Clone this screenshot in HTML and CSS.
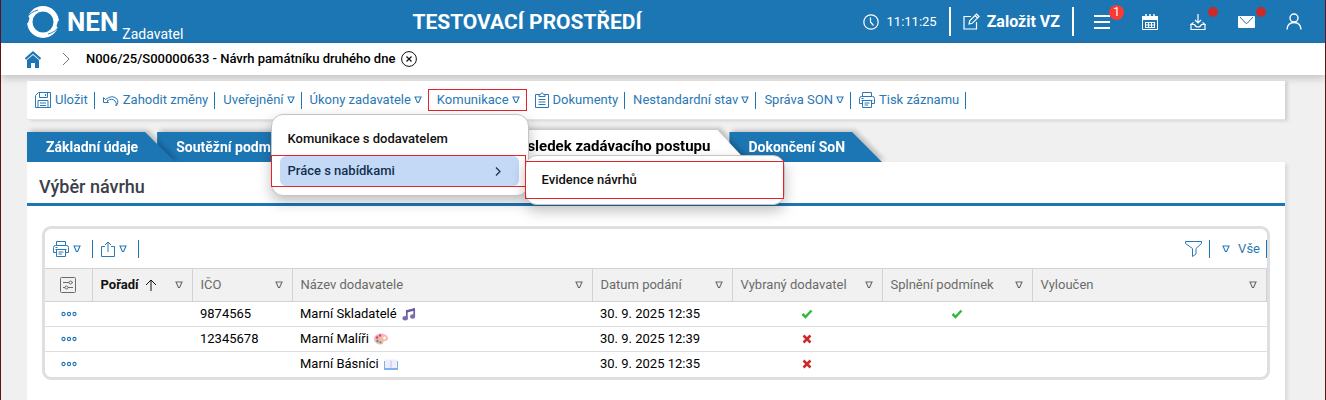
FILE: index.html
```html
<!DOCTYPE html>
<html lang="cs">
<head>
    <meta charset="UTF-8">
    <meta name="viewport" content="width=device-width, initial-scale=1.0">
    <title>NEN - Zadavatel</title>
    <link rel="stylesheet" href="styles.css">
</head>
<body>
    <!-- shared icons -->
    <svg class="sprite" aria-hidden="true">
        <symbol id="arrow" viewBox="0 0 8 8"><path d="M1 1h6L4.6 6.5H3.4z" fill="none" stroke="currentColor" stroke-width="1.1"/></symbol>
        <symbol id="printer" viewBox="0 0 16 16"><path d="M3.5 4.5v-4h9v4M3.5 11.500h-3v-5q0-2 2-2h11q2 0 2 2v5h-3M2.500 6.500h2M2.500 8.500h11M3.500 8.500v7h9v-7M5.500 11h5M5.500 13h3.500" fill="none" stroke="currentColor"/></symbol>
        <symbol id="dots" viewBox="0 0 16 6"><g fill="none" stroke="currentColor" stroke-width="1.100"><circle cx="2.500" cy="3" r="1.600"/><circle cx="8" cy="3" r="1.600"/><circle cx="13.500" cy="3" r="1.600"/></g></symbol>
        <symbol id="yes" viewBox="0 0 12 10"><path d="M1.500 5l3 3 6-6.500" fill="none" stroke="#38b838" stroke-width="2.500"/></symbol>
        <symbol id="no" viewBox="0 0 10 10"><path d="M1.500 1.500l7 7M8.500 1.500l-7 7" fill="none" stroke="#cc2a2a" stroke-width="2.500"/></symbol>
    </svg>

    <header class="header">
        <a class="brand" href="#">
            <svg width="32" height="32" viewBox="0 0 32 32">
                <circle cx="16" cy="16" r="13.200" fill="none" stroke="#fff" stroke-width="5.400"/>
                <path d="M0 12Q3 6 11 4M32 20q-3 6-11 8" fill="none" stroke="#1d76b4" stroke-width=".9"/>
                <path d="M0 9l2.500 3L1 17H0zM32 23l-2.500-3L31 15h1z" fill="#1d76b4"/>
            </svg>
            <span class="brand-name">NEN</span>
            <span class="brand-role">Zadavatel</span>
        </a>
        <div class="env">TESTOVACÍ PROSTŘEDÍ</div>
        <div class="header-right">
            <div class="clock">
                <svg width="16" height="16" viewBox="0 0 16 16" fill="none" stroke="currentColor" stroke-width="1.200"><circle cx="8" cy="8" r="7.200"/><path d="M7.500 3.500V8l3 3.500"/></svg>
                <span>11:11:25</span>
            </div>
            <button class="new-vz">
                <svg width="17" height="17" viewBox="0 0 17 17" fill="none" stroke="currentColor" stroke-width="1.200"><path d="M8 3.500H1v12.500h12.500V9M6 11l.7-3.200L13.500 1l2.500 2.500-6.800 6.800zM12 2.500L14.500 5"/></svg>
                Založit VZ
            </button>
            <button class="icon-btn" aria-label="Menu">
                <svg width="16" height="16" viewBox="0 0 16 16" stroke="currentColor" stroke-width="2"><path d="M0 2h16M0 8h16M0 14h16"/></svg>
                <span class="badge">1</span>
            </button>
            <button class="icon-btn" aria-label="Kalendář">
                <svg width="16" height="16" viewBox="0 0 16 16" fill="none" stroke="currentColor"><path d="M.5 2.500h15v13H.5z"/><path d="M0 4h16" stroke-width="4"/><path d="M4 0v4M8 0v4M12 0v4" stroke-width="1.500"/><path d="M3 8.500h10M3 11h10M3 13.500h10M3.500 8v6M6.500 8v6M9.500 8v6M12.500 8v6"/></svg>
            </button>
            <button class="icon-btn" aria-label="Stažené">
                <svg width="16" height="16" viewBox="0 0 16 16" fill="none" stroke="currentColor" stroke-width="1.200"><path d="M8 0v8.500M5 6l3 3 3-3M3.500 8.500L1 10.500h3.500q1 2.500 3.500 2.500t3.500-2.500H15l-2.500-2M1 10.500v5h14v-5"/></svg>
                <span class="dot"></span>
            </button>
            <button class="icon-btn" aria-label="Zprávy">
                <svg width="17" height="12" viewBox="0 0 17 12"><rect width="17" height="12" rx="1" fill="#fff"/><path d="M2 1l5.500 6q1 1 2 0L15 1" fill="none" stroke="#1d76b4"/></svg>
                <span class="dot"></span>
            </button>
            <button class="icon-btn" aria-label="Uživatel">
                <svg width="16" height="17" viewBox="0 0 16 17" fill="none" stroke="currentColor" stroke-width="1.400"><circle cx="8" cy="5" r="4"/><path d="M1 16.500Q1.500 9.500 8 9.500t7 7"/></svg>
            </button>
        </div>
    </header>

    <nav class="breadcrumb">
        <a href="#" aria-label="Domů">
            <svg width="16" height="17" viewBox="0 0 16 17"><path d="M.5 8L8 1.500 15.500 8" fill="none" stroke="#1d76b4" stroke-width="2.200"/><path d="M2 9l6-5 6 5v8h-4v-5H6v5H2z" fill="#1d76b4"/></svg>
        </a>
        <svg class="crumb-sep" width="8" height="14" viewBox="0 0 8 14"><path d="M1 1l6 6-6 6" fill="none" stroke="#777"/></svg>
        <span class="crumb">N006/25/S00000633 - Návrh památníku druhého dne</span>
        <button class="close" aria-label="Zavřít">
            <svg width="16" height="16" viewBox="0 0 16 16" fill="none" stroke="#111"><circle cx="8" cy="8" r="7.400"/><path d="M5.500 5.500l5 5M10.500 5.500l-5 5" stroke-width="1.200"/></svg>
        </button>
    </nav>

    <main class="content">
        <ul class="toolbar">
            <li><button>
                <svg width="16" height="17" viewBox="0 0 16 17" fill="none" stroke="currentColor"><path d="M3.500.5h12v15h-15v-12zM4.500.5v5h8v-5M10.500 2v2M3 15.500v-7h10v7M5 11h6M5 13.500h6"/></svg>
                Uložit</button></li>
            <li><button>
                <svg width="16" height="16" viewBox="0 0 16 16" fill="none" stroke="currentColor"><path d="M.5 5.500v5h5L4 9q5-3.500 8 0 2 2 1 5 3.500-4 .5-7.500Q9 2.500 2.500 7.500z"/></svg>
                Zahodit změny</button></li>
            <li><button class="drop-btn">Uveřejnění <svg width="8" height="8"><use href="#arrow"/></svg></button></li>
            <li><button class="drop-btn">Úkony zadavatele <svg width="8" height="8"><use href="#arrow"/></svg></button></li>
            <li class="has-menu">
                <button class="drop-btn marked">Komunikace <svg width="8" height="8"><use href="#arrow"/></svg></button>
                <ul class="menu">
                    <li><a href="#">Komunikace s dodavatelem</a></li>
                    <li class="active marked">
                        <a href="#">Práce s nabídkami
                            <svg width="6" height="9" viewBox="0 0 6 9"><path d="M1 .5l4 4-4 4" fill="none" stroke="currentColor" stroke-width="1.200"/></svg>
                        </a>
                        <ul class="menu submenu">
                            <li class="marked"><a href="#">Evidence návrhů</a></li>
                        </ul>
                    </li>
                </ul>
            </li>
            <li><button>
                <svg width="14" height="16" viewBox="0 0 14 16" fill="none" stroke="currentColor"><path d="M4.500 2.500h-4v13h13v-13h-4M4 4.500v-2h1.500Q7-1 8.500 2.500H10v2zM3.500 7.500h7M3.500 10h7M3.500 12.500h7"/></svg>
                Dokumenty</button></li>
            <li><button class="drop-btn">Nestandardní stav <svg width="8" height="8"><use href="#arrow"/></svg></button></li>
            <li><button class="drop-btn">Správa SON <svg width="8" height="8"><use href="#arrow"/></svg></button></li>
            <li><button><svg width="16" height="16"><use href="#printer"/></svg> Tisk záznamu</button></li>
        </ul>

        <ul class="tabs">
            <li><a href="#">Základní údaje</a></li>
            <li class="wide"><a href="#">Soutěžní podmínky</a></li>
            <li class="current"><a href="#">Výsledek zadávacího postupu</a></li>
            <li><a href="#">Dokončení SoN</a></li>
        </ul>

        <section class="panel">
            <h1>Výběr návrhu</h1>
            <div class="grid">
                <div class="grid-bar">
                    <button aria-label="Tisk"><svg width="16" height="16"><use href="#printer"/></svg><svg width="8" height="8"><use href="#arrow"/></svg></button>
                    <button aria-label="Export"><svg width="14" height="16" viewBox="0 0 14 16" fill="none" stroke="currentColor"><path d="M4 5.500H.5v10h13v-10H10M7 11V1M4 4l3-3 3 3"/></svg><svg width="8" height="8"><use href="#arrow"/></svg></button>
                    <button class="filter" aria-label="Filtr"><svg width="17" height="16" viewBox="0 0 17 16" fill="none" stroke="currentColor"><path d="M.5.5h16v2l-5.500 5v5.500l-3.500 2.500v-8L.5 2.500z"/></svg></button>
                    <button class="all"><svg width="8" height="8"><use href="#arrow"/></svg> Vše</button>
                </div>
                <table>
                    <colgroup>
                        <col class="c-menu"><col class="c-100"><col class="c-100"><col class="c-name"><col class="c-date"><col class="c-150"><col class="c-150"><col>
                    </colgroup>
                    <thead>
                        <tr>
                            <th class="center"><svg width="16" height="16" viewBox="0 0 16 16" fill="none" stroke="currentColor"><rect x=".5" y=".5" width="15" height="15" rx="1"/><path d="M3 5.500h6M12 5.500h1M3 10.500h2M8 10.500h5"/><circle cx="10.500" cy="5.500" r="1.500"/><circle cx="6.500" cy="10.500" r="1.500"/></svg></th>
                            <th class="sorted"><div>Pořadí <svg width="12" height="12" viewBox="0 0 12 12" fill="none" stroke="currentColor"><path d="M6 12V1M1 6l5-5 5 5"/></svg><svg class="drop" width="8" height="8"><use href="#arrow"/></svg></div></th>
                            <th><div>IČO <svg class="drop" width="8" height="8"><use href="#arrow"/></svg></div></th>
                            <th><div>Název dodavatele <svg class="drop" width="8" height="8"><use href="#arrow"/></svg></div></th>
                            <th><div>Datum podání <svg class="drop" width="8" height="8"><use href="#arrow"/></svg></div></th>
                            <th><div>Vybraný dodavatel <svg class="drop" width="8" height="8"><use href="#arrow"/></svg></div></th>
                            <th><div>Splnění podmínek <svg class="drop" width="8" height="8"><use href="#arrow"/></svg></div></th>
                            <th><div>Vyloučen <svg class="drop" width="8" height="8"><use href="#arrow"/></svg></div></th>
                        </tr>
                    </thead>
                    <tbody>
                        <tr>
                            <td class="center"><a href="#" aria-label="Akce"><svg width="16" height="6"><use href="#dots"/></svg></a></td>
                            <td></td>
                            <td>9874565</td>
                            <td><div class="name">Marní Skladatelé
                                <svg width="14" height="14" viewBox="0 0 14 14"><path d="M5 3l8-2v2.500l-8 2z" fill="#6a5a9e"/><path d="M4.800 3v8M12.200 1.500V9" stroke="#6a5a9e" stroke-width="1.700"/><ellipse cx="3.200" cy="11.300" rx="2.700" ry="2.200" fill="#7d6bb0"/><ellipse cx="10.600" cy="9.500" rx="2.600" ry="2.200" fill="#7d6bb0"/></svg>
                            </div></td>
                            <td>30. 9. 2025 12:35</td>
                            <td class="center"><svg width="12" height="10"><use href="#yes"/></svg></td>
                            <td class="center"><svg width="12" height="10"><use href="#yes"/></svg></td>
                            <td></td>
                        </tr>
                        <tr>
                            <td class="center"><a href="#" aria-label="Akce"><svg width="16" height="6"><use href="#dots"/></svg></a></td>
                            <td></td>
                            <td>12345678</td>
                            <td><div class="name">Marní Malíři
                                <svg width="14" height="12" viewBox="0 0 14 12"><path d="M7 .5c4 0 7 2.500 7 5 0 2-2 2.500-3.500 2.500-2 0-.5 3.500-3.500 3.500-4 0-7-2.500-7-5.500S3 .5 7 .5z" fill="#f9b8a4"/><circle cx="3" cy="4.500" r="1.300" fill="#e0407a"/><circle cx="6" cy="2.500" r="1.200" fill="#a64fd0"/><circle cx="3.500" cy="8" r="1.200" fill="#2899c8"/><circle cx="6.500" cy="9.300" r="1.100" fill="#3aa6a0"/><circle cx="10.500" cy="5" r="1.400" fill="#fff"/></svg>
                            </div></td>
                            <td>30. 9. 2025 12:39</td>
                            <td class="center"><svg width="10" height="10"><use href="#no"/></svg></td>
                            <td></td>
                            <td></td>
                        </tr>
                        <tr>
                            <td class="center"><a href="#" aria-label="Akce"><svg width="16" height="6"><use href="#dots"/></svg></a></td>
                            <td></td>
                            <td></td>
                            <td><div class="name">Marní Básníci
                                <svg width="14" height="11" viewBox="0 0 14 11"><path d="M0 2h14v9H0z" fill="#7fb2ea"/><path d="M1 .5h5.800v8.500H1zM7.200.5H13v8.500H7.200z" fill="#f0edfa"/><path d="M7 1v8" stroke="#c9c4e4" stroke-width=".6"/></svg>
                            </div></td>
                            <td>30. 9. 2025 12:35</td>
                            <td class="center"><svg width="10" height="10"><use href="#no"/></svg></td>
                            <td></td>
                            <td></td>
                        </tr>
                    </tbody>
                </table>
            </div>
        </section>
    </main>
</body>
</html>
```
FILE: styles.css
```css
* {
    box-sizing: border-box;
}
body {
    font-family: Roboto, "Liberation Sans", sans-serif;
    font-size: 13px;
    line-height: 16px;
    color: #000;
    background-color: #f0f0f0;
    margin: 0;
    min-height: 100vh;
    display: flex;
    flex-direction: column;
    border-left: 1px solid #5c1414;
    border-right: 1px solid #5c1414;
}
ul {
    list-style: none;
    margin: 0;
    padding: 0;
}
a {
    color: inherit;
    text-decoration: none;
}
button {
    font: inherit;
    color: inherit;
    background: none;
    border: 0;
    padding: 0;
    cursor: pointer;
    display: flex;
    align-items: center;
}
svg {
    display: block;
    flex: none;
}
.sprite {
    display: none;
}

/* header */
.header {
    display: grid;
    grid-template-columns: auto 1fr auto;
    align-items: center;
    height: 43px;
    padding: 0 7px 0 26px;
    background-color: #1d76b4;
    color: #fff;
}
.brand {
    display: flex;
    align-items: center;
    padding-right: 8px;
}
.brand-name {
    font-size: 26px;
    font-weight: 700;
    padding: 0 4px 0 8px;
}
.brand-role {
    font-size: 14px;
    align-self: flex-end;
    margin-bottom: -4px;
}
.env {
    font-size: 21px;
    font-weight: 700;
    text-align: center;
}
.header-right {
    display: flex;
    align-items: center;
}
.clock {
    display: flex;
    align-items: center;
    gap: 8px;
    padding-right: 12px;
}
.new-vz {
    height: 29px;
    gap: 7px;
    padding: 0 12px;
    margin-right: 4px;
    border-left: 2px solid #fff;
    border-right: 2px solid #fff;
    font-size: 16px;
    font-weight: 700;
}
.icon-btn {
    position: relative;
    justify-content: center;
    width: 48px;
    height: 43px;
}
.badge {
    position: absolute;
    top: 5px;
    right: 2px;
    width: 15px;
    height: 15px;
    border-radius: 50%;
    background-color: #f93b33;
    font-size: 12px;
    line-height: 15px;
}
.dot {
    position: absolute;
    top: 7px;
    right: 4px;
    width: 10px;
    height: 10px;
    border-radius: 50%;
    background-color: #c92a2a;
}

/* breadcrumb */
.breadcrumb {
    display: flex;
    align-items: center;
    height: 32px;
    padding-left: 24px;
    background-color: #fff;
    box-shadow: 0 3px 8px rgba(0, 0, 0, 0.2);
}
.crumb-sep {
    margin: 0 16px 0 21px;
}
.crumb {
    font-weight: 500;
    margin-right: 6px;
}

/* toolbar */
.content {
    flex: 1;
    display: flex;
    flex-direction: column;
    padding: 6px 40px 0 26px;
}
.toolbar {
    position: relative;
    z-index: 10;
    display: flex;
    align-items: center;
    height: 39px;
    background-color: #fff;
    border-bottom: 1px solid #e4e4e4;
    box-shadow: 3px 1px 3px rgba(0, 0, 0, 0.12);
    color: #2a78b5;
}
.toolbar button {
    height: 17px;
    gap: 4px;
    padding: 0 6px 0 8px;
    border-right: 1px solid #1d76b4;
    white-space: nowrap;
}
.toolbar .drop-btn {
    gap: 3px;
}
.has-menu {
    position: relative;
    margin-left: -1px;
}
.toolbar .marked {
    border: 1px solid #e8222a;
}
.toolbar button.marked {
    height: 22px;
}

/* drop-down menu */
.menu {
    position: absolute;
    top: 25px;
    right: -2px;
    width: 258px;
    padding: 8px 0;
    background-color: #fff;
    border: 1px solid #c4c4c4;
    border-radius: 12px;
    box-shadow: 0 6px 14px rgba(0, 0, 0, 0.25);
    color: #111;
    font-weight: 500;
}
.menu li {
    height: 32px;
    padding: 0 8px;
}
.menu a {
    display: flex;
    align-items: center;
    justify-content: space-between;
    height: 100%;
    padding: 0 18px 0 8px;
    border-radius: 6px;
}
.menu li.active {
    position: relative;
    margin: 0 2px 0 -1px;
}
.active > a {
    background-color: #c3d9f6;
    margin-right: -2px;
    color: #14304f;
}
.menu .submenu {
    top: -1px;
    left: 100%;
    width: 260px;
    padding: 5px 0;
}
.submenu .marked {
    height: 38px;
    margin-left: -1px;
}

/* tabs */
.tabs {
    display: flex;
    align-items: flex-end;
    margin-top: 10px;
    height: 32px;
}
.tabs li {
    position: relative;
    margin-right: -18px;
    filter: drop-shadow(3px -2px 2px rgba(0, 0, 0, 0.2));
}
.tabs li:nth-child(1) { z-index: 4; }
.tabs li:nth-child(2) { z-index: 3; }
.tabs li:nth-child(3) { z-index: 2; }
.tabs a {
    display: flex;
    align-items: center;
    height: 30px;
    padding: 0 37px 0 19px;
    background-color: #1d76b4;
    color: #fff;
    font-size: 14px;
    font-weight: 700;
    white-space: nowrap;
    clip-path: polygon(0 0, calc(100% - 30px) 0, 100% 100%, 0 100%);
}
.tabs .wide {
    width: 352px;
}
.tabs .current a {
    height: 32px;
    background-color: #fff;
    color: #000;
    font-size: 15px;
}

/* panel */
.panel {
    flex: 1;
    position: relative;
    z-index: 5;
    background-color: #fff;
    box-shadow: 3px 2px 3px rgba(0, 0, 0, 0.08);
}
h1 {
    margin: 0;
    height: 44px;
    padding: 15px 12px 0;
    border-bottom: 3px solid #1d76b4;
    color: #3a3f4b;
    font-size: 18px;
    line-height: 20px;
    font-weight: 500;
}
.grid {
    margin: 20px 15px;
    border: 3px solid #dedfe0;
    border-radius: 9px;
    overflow: hidden;
}
.grid-bar {
    display: flex;
    align-items: center;
    height: 39px;
    color: #2a78b5;
}
.grid-bar button {
    height: 18px;
    gap: 4px;
    padding: 0 11px 0 8px;
    border-right: 1px solid #1d76b4;
}
.grid-bar .filter {
    margin-left: auto;
    padding-right: 7px;
}
.grid-bar .all {
    gap: 8px;
    padding: 0 6px 0 12px;
}

/* table */
table {
    width: 100%;
    table-layout: fixed;
    border-collapse: collapse;
}
.c-menu { width: 47px; }
.c-100 { width: 100px; }
.c-name { width: 300px; }
.c-date { width: 140px; }
.c-150 { width: 150px; }
th {
    height: 33px;
    padding: 0 9px 0 8px;
    background-color: #f1f1f1;
    border: 1px solid #d2d2d2;
    border-left: 0;
    color: #6b6b6b;
    font-weight: 400;
    text-align: left;
}
th div {
    display: flex;
    align-items: center;
    gap: 6px;
    white-space: nowrap;
}
th .drop {
    margin-left: auto;
}
.sorted {
    color: #111;
    font-weight: 700;
}
.sorted .drop {
    color: #6b6b6b;
}
td {
    height: 25px;
    padding: 0 8px;
    border-bottom: 1px solid #dedede;
}
tr:last-child td {
    border-bottom: 0;
}
td a {
    color: #1d76b4;
}
.center svg {
    margin: 0 auto;
}
.name {
    display: flex;
    align-items: center;
    gap: 5px;
}
```
